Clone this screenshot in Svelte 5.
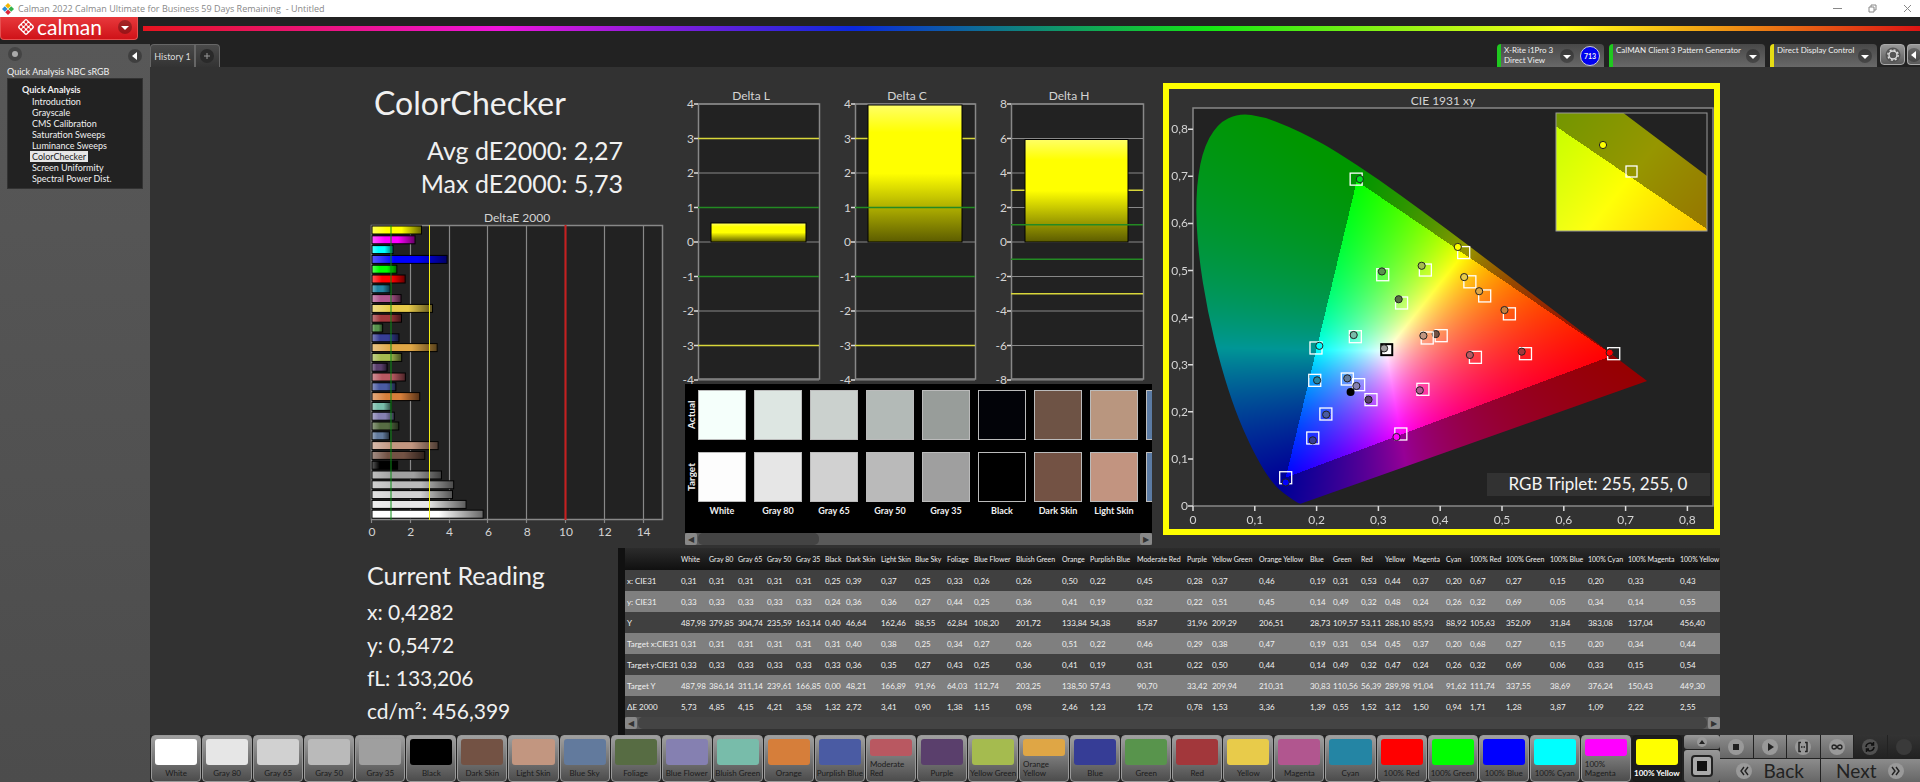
<script>
	import { onMount } from 'svelte';

	const pages = [
		'Introduction',
		'Grayscale',
		'CMS Calibration',
		'Saturation Sweeps',
		'Luminance Sweeps',
		'ColorChecker',
		'Screen Uniformity',
		'Spectral Power Dist.'
	];
	let currentPage = $state('ColorChecker');

	// name, color, table column width
	const patches = [
		['White', '#ffffff', 28],
		['Gray 80', '#e6e6e6', 29],
		['Gray 65', '#d1d1d1', 29],
		['Gray 50', '#bababa', 29],
		['Gray 35', '#9f9f9f', 29],
		['Black', '#000000', 21],
		['Dark Skin', '#735244', 35],
		['Light Skin', '#c29680', 34],
		['Blue Sky', '#627a9d', 32],
		['Foliage', '#576c43', 27],
		['Blue Flower', '#8580b1', 42],
		['Bluish Green', '#78bcaa', 46],
		['Orange', '#d67e3a', 28],
		['Purplish Blue', '#4a5ba3', 47],
		['Moderate Red', '#b95861', 50],
		['Purple', '#5a3f6c', 25],
		['Yellow Green', '#a5bb4f', 47],
		['Orange Yellow', '#dfa645', 51],
		['Blue', '#363d96', 23],
		['Green', '#58944c', 28],
		['Red', '#a2373b', 24],
		['Yellow', '#e8cb4a', 28],
		['Magenta', '#b1568f', 33],
		['Cyan', '#2485a4', 24],
		['100% Red', '#ff0000', 36],
		['100% Green', '#00ff00', 44],
		['100% Blue', '#0000ff', 38],
		['100% Cyan', '#00ffff', 40],
		['100% Magenta', '#ff00ff', 52],
		['100% Yellow', '#ffff00', 40]
	].map(([name, color, width]) => ({ name, color, width }));
	let selected = $state('100% Yellow');

	const readings = [
		['x: CIE31', '0,31 0,31 0,31 0,31 0,31 0,25 0,39 0,37 0,25 0,33 0,26 0,26 0,50 0,22 0,45 0,28 0,37 0,46 0,19 0,31 0,53 0,44 0,37 0,20 0,67 0,27 0,15 0,20 0,33 0,43'],
		['y: CIE31', '0,33 0,33 0,33 0,33 0,33 0,24 0,36 0,36 0,27 0,44 0,25 0,36 0,41 0,19 0,32 0,22 0,51 0,45 0,14 0,49 0,32 0,48 0,24 0,26 0,32 0,69 0,05 0,34 0,14 0,55'],
		['Y', '487,98 379,85 304,74 235,59 163,14 0,40 46,64 162,46 88,55 62,84 108,20 201,72 133,84 54,38 85,87 31,96 209,29 206,51 28,73 109,57 53,11 288,10 85,93 88,92 105,63 352,09 31,84 383,08 137,04 456,40'],
		['Target x:CIE31', '0,31 0,31 0,31 0,31 0,31 0,31 0,40 0,38 0,25 0,34 0,27 0,26 0,51 0,22 0,46 0,29 0,38 0,47 0,19 0,31 0,54 0,45 0,37 0,20 0,68 0,27 0,15 0,20 0,34 0,44'],
		['Target y:CIE31', '0,33 0,33 0,33 0,33 0,33 0,33 0,36 0,35 0,27 0,43 0,25 0,36 0,41 0,19 0,31 0,22 0,50 0,44 0,14 0,49 0,32 0,47 0,24 0,26 0,32 0,69 0,06 0,33 0,15 0,54'],
		['Target Y', '487,98 386,14 311,14 239,61 166,85 0,00 48,21 166,89 91,96 64,03 112,74 203,25 138,50 57,43 90,70 33,42 209,94 210,31 30,83 110,56 56,39 289,98 91,04 91,62 111,74 337,55 38,69 376,24 150,43 449,30'],
		['ΔE 2000', '5,73 4,85 4,15 4,21 3,58 1,32 2,72 3,41 0,90 1,38 1,15 0,98 2,46 1,23 1,72 0,78 1,53 3,36 1,39 0,55 1,52 3,12 1,50 0,94 1,71 1,28 3,87 1,09 2,22 2,55']
	].map(([label, line]) => ({ label, cells: line.split(' ') }));

	const dE = readings[6].cells.map((v) => parseFloat(v.replace(',', '.')));
	const bars = patches.map((p, i) => ({ ...p, value: dE[i] })).reverse();

	const deltas = [
		{ name: 'Delta L', x: 28, w: 121, mid: 81, max: 4, barX: 41, barW: 95, value: 0.58 },
		{ name: 'Delta C', x: 185, w: 120, mid: 237, max: 4, barX: 198, barW: 94, value: 4 },
		{ name: 'Delta H', x: 341, w: 132, mid: 399, max: 8, barX: 355, barW: 103, value: 6 }
	];
	const steps = [-4, -3, -2, -1, 0, 1, 2, 3, 4];
	const deltaY = (v, max) => 162 - (v * 138) / max;

	const actual = ['#f5fffb', '#dde6e2', '#cbd1ce', '#b3bab7', '#989d9a', '#020308', '#6e5345', '#b9967f', '#5b7ba4'];
	const target = ['#fdfdfd', '#e6e6e6', '#d1d1d1', '#bababa', '#9f9f9f', '#000000', '#735244', '#c29480', '#5b7ba4'];

	// target x, target y, measured x, measured y, color
	const points = [
		[0.264, 0.694, 0.27, 0.694, '#00e020'],
		[0.438, 0.538, 0.4285, 0.55, '#ffff00'],
		[0.307, 0.491, 0.3057, 0.498, '#58944c'],
		[0.376, 0.501, 0.37, 0.51, '#a5bb4f'],
		[0.3375, 0.431, 0.3328, 0.439, '#576c43'],
		[0.448, 0.476, 0.4388, 0.486, '#e8cb4a'],
		[0.472, 0.446, 0.463, 0.456, '#dfa645'],
		[0.512, 0.408, 0.504, 0.416, '#c8803e'],
		[0.4016, 0.3616, 0.3928, 0.365, '#735244'],
		[0.379, 0.3567, 0.3728, 0.3616, '#c29680'],
		[0.2627, 0.3595, 0.26, 0.363, '#78bcaa'],
		[0.199, 0.3355, 0.2044, 0.34, '#00ffff'],
		[0.197, 0.2668, 0.2008, 0.2668, '#2485a4'],
		[0.2497, 0.2696, 0.2497, 0.271, '#627a9d'],
		[0.268, 0.2576, 0.2644, 0.2548, '#8580b1'],
		[0.288, 0.2258, 0.284, 0.2258, '#5a3f6c'],
		[0.372, 0.2477, 0.367, 0.2456, '#b1568f'],
		[0.457, 0.3156, 0.448, 0.3206, '#b95861'],
		[0.538, 0.3234, 0.5318, 0.3277, '#a2373b'],
		[0.6808, 0.3234, 0.6743, 0.3255, '#ff0000'],
		[0.215, 0.1953, 0.2155, 0.194, '#4a5ba3'],
		[0.1938, 0.1444, 0.1938, 0.1394, '#363d96'],
		[0.15, 0.06, 0.15, 0.05, '#0000ff'],
		[0.3363, 0.1529, 0.3292, 0.1465, '#ff00ff']
	];
	const cx = (x) => 24 + x * 618;
	const cy = (y) => 417 - y * 471;
	const tenths = [0, 1, 2, 3, 4, 5, 6, 7, 8];
	const tenth = (n) => (n === 0 ? '0' : '0,' + n);

	// spectral locus, CIE 1931 2 degree observer
	const locus = [
		[0.1741, 0.005], [0.1714, 0.0051], [0.1644, 0.0109], [0.1566, 0.0177], [0.144, 0.0297],
		[0.1355, 0.0399], [0.1241, 0.0578], [0.1096, 0.0868], [0.0913, 0.1327], [0.0687, 0.2007],
		[0.0454, 0.295], [0.0235, 0.4127], [0.0082, 0.5384], [0.0039, 0.6548], [0.0139, 0.7502],
		[0.0389, 0.812], [0.0743, 0.8338], [0.1142, 0.8262], [0.1547, 0.8059], [0.1929, 0.7816],
		[0.2296, 0.7543], [0.3016, 0.6923], [0.3731, 0.6245], [0.4441, 0.5547], [0.5125, 0.4866],
		[0.5752, 0.4242], [0.627, 0.3725], [0.6658, 0.334], [0.6915, 0.3083], [0.719, 0.2809],
		[0.7347, 0.2653]
	];

	let diagram;
	let inset;

	function drawGamut(canvas, x0, y0, sx, sy) {
		const ctx = canvas.getContext('2d');
		const { width, height } = canvas;
		const image = ctx.createImageData(width, height);
		for (let j = 0; j < height; j++) {
			for (let i = 0; i < width; i++) {
				const x = x0 + (i + 0.5) / sx;
				const y = Math.max(y0 - (j + 0.5) / sy, 0.001);
				const X = x / y;
				const Z = (1 - x - y) / y;
				const r = 2.4935 * X - 0.9314 - 0.4027 * Z;
				const g = -0.8295 * X + 1.7627 + 0.0236 * Z;
				const b = 0.0358 * X - 0.0762 + 0.9569 * Z;
				const top = Math.max(r, g, b);
				const shade = Math.min(r, g, b) < 0 ? 150 : 255;
				const k = (j * width + i) * 4;
				image.data[k] = (Math.max(r, 0) / top) * shade;
				image.data[k + 1] = (Math.max(g, 0) / top) * shade;
				image.data[k + 2] = (Math.max(b, 0) / top) * shade;
				image.data[k + 3] = 255;
			}
		}
		ctx.putImageData(image, 0, 0);

		const pts = locus.map(([x, y]) => [(x - x0) * sx, (y0 - y) * sy]);
		ctx.globalCompositeOperation = 'destination-in';
		ctx.beginPath();
		ctx.moveTo(...pts[0]);
		for (let i = 1; i < pts.length - 1; i++) {
			const [ax, ay] = pts[i];
			const [bx, by] = pts[i + 1];
			ctx.quadraticCurveTo(ax, ay, (ax + bx) / 2, (ay + by) / 2);
		}
		ctx.lineTo(...pts[pts.length - 1]);
		ctx.closePath();
		ctx.fill();
	}

	onMount(() => {
		drawGamut(diagram, 0, 398 / 471, 618, 471);
		drawGamut(inset, 0.438 - 75 / 3090, 0.538 + 59 / 2355, 3090, 2355);
	});
</script>

{#snippet caret(direction)}
	<svg class="caret" viewBox="0 0 16 16" aria-hidden="true">
		<circle cx="8" cy="8" r="7" fill="#000" fill-opacity=".28" />
		{#if direction === 'left'}
			<path d="M10 4v8L5 8z" fill="#fff" />
		{:else}
			<path d="M4 7h8l-4 4z" fill="#fff" />
		{/if}
	</svg>
{/snippet}

<div class="app">
	<div class="titlebar">
		<svg width="12" height="12" viewBox="0 0 12 12" aria-hidden="true">
			<path d="M6 0l2.800 2.800L6 5.600 3.200 2.800z" fill="#f2b705" />
			<path d="M9.200 3.200L12 6 9.200 8.800 6.400 6z" fill="#33b24a" />
			<path d="M6 6.400l2.800 2.800L6 12 3.200 9.200z" fill="#d9263a" />
			<path d="M2.800 3.200L5.600 6 2.800 8.800 0 6z" fill="#2b8fd6" />
		</svg>
		<span>Calman 2022 Calman Ultimate for Business 59 Days Remaining &nbsp;- Untitled</span>
		<div class="window-buttons">
			<button aria-label="Minimize"><svg viewBox="0 0 9 9"><path d="M0 4.500h9" /></svg></button>
			<button aria-label="Restore"><svg viewBox="0 0 9 9"><path d="M1 3h5v5H1zM3 3V1h5v5H6" /></svg></button>
			<button aria-label="Close"><svg viewBox="0 0 9 9"><path d="M1 1l7 7M8 1L1 8" /></svg></button>
		</div>
	</div>

	<header class="brand">
		<button class="logo" aria-label="Calman menu">
			<svg width="18" height="18" viewBox="0 0 18 18" aria-hidden="true">
				<rect x="2.800" y="2.800" width="12.400" height="12.400" rx="2" transform="rotate(45 9 9)" fill="#fff" />
				<g fill="#dc2228">
					<circle cx="9" cy="4" r="1.400" /><circle cx="6.500" cy="6.500" r="1.400" /><circle cx="11.500" cy="6.500" r="1.400" />
					<circle cx="4" cy="9" r="1.400" /><circle cx="9" cy="9" r="1.400" /><circle cx="14" cy="9" r="1.400" />
					<circle cx="6.500" cy="11.500" r="1.400" /><circle cx="11.500" cy="11.500" r="1.400" /><circle cx="9" cy="14" r="1.400" />
				</g>
			</svg>
			<span>calman</span>
			{@render caret('down')}
		</button>
		<div class="rainbow"></div>
	</header>

	<div class="body">
		<aside>
			<div class="aside-top">
				<svg class="caret" viewBox="0 0 16 16" aria-hidden="true">
					<circle cx="8" cy="8" r="7" fill="#444" />
					<circle cx="8" cy="8" r="3" fill="#aaa" />
				</svg>
				<button aria-label="Collapse">{@render caret('left')}</button>
			</div>
			<h2>Quick Analysis NBC sRGB</h2>
			<nav>
				<strong>Quick Analysis</strong>
				{#each pages as page}
					<a href="#{page}" class:active={page === currentPage} onclick={() => (currentPage = page)}>{page}</a>
				{/each}
			</nav>
		</aside>

		<main>
			<div class="tabs">
				<button class="tab">History 1</button>
				<button class="tab add" aria-label="Add history">
					<svg class="caret" viewBox="0 0 16 16"><circle cx="8" cy="8" r="7" fill="#2a2a2a" /><path d="M5 8h6M8 5v6" stroke="#999" /></svg>
				</button>
				<div class="devices">
					<button class="device meter">
						<span>X-Rite i1Pro 3<br />Direct View</span>
						{@render caret('down')}
						<b>713</b>
					</button>
					<button class="device source">
						<span>CalMAN Client 3 Pattern Generator</span>
						{@render caret('down')}
					</button>
					<button class="device display">
						<span>Direct Display Control</span>
						{@render caret('down')}
					</button>
					<button class="square" aria-label="Settings">
						<svg viewBox="0 0 16 16">
							<circle cx="8" cy="8" r="7.500" fill="#555" />
							<circle cx="8" cy="8" r="4" fill="none" stroke="#ddd" stroke-width="1.400" />
							<circle cx="8" cy="8" r="5.200" fill="none" stroke="#ddd" stroke-width="1.400" stroke-dasharray="2 2.080" />
						</svg>
					</button>
					<button class="square cut" aria-label="Expand">{@render caret('left')}</button>
				</div>
			</div>

			<section class="charts">
				<div class="summary">
					<h1>ColorChecker</h1>
					<p>Avg dE2000: 2,27</p>
					<p>Max dE2000: 5,73</p>
					<svg viewBox="0 0 306 334" role="img" aria-label="DeltaE 2000">
						<defs>
							<linearGradient id="shade-x">
								<stop offset="0" stop-color="#fff" stop-opacity=".35" />
								<stop offset=".3" stop-color="#fff" stop-opacity="0" />
								<stop offset=".6" stop-color="#000" stop-opacity="0" />
								<stop offset="1" stop-color="#000" stop-opacity=".6" />
							</linearGradient>
						</defs>
						<text x="153" y="17" text-anchor="middle">DeltaE 2000</text>
						<rect class="plot" x="7.500" y="20.500" width="291" height="294" />
						{#each [0, 2, 4, 6, 8, 10, 12, 14] as v}
							<path class="grid" d="M{Math.round(7 + v * 19.4) + 0.5} 20v298" />
							<text x={8 + v * 19.4} y="331" text-anchor="middle">{v}</text>
						{/each}
						{#each bars as bar, i}
							<rect x="8" y={21 + i * 9.8} width={bar.value * 19.4} height="8" fill={bar.color} />
							<rect x="8" y={21 + i * 9.8} width={bar.value * 19.4} height="8" fill="url(#shade-x)" stroke="#000" />
						{/each}
						<path d="M27 20v295" stroke="#0a8a14" />
						<path d="M65.500 20v295" stroke="#f2ee18" />
						<path d="M201.500 20v295" stroke="#c81e1e" stroke-width="2" />
					</svg>
				</div>

				<div class="middle">
					<svg viewBox="0 0 493 304" role="img" aria-label="Delta L, C and H">
						<defs>
							<linearGradient id="shade-y" x2="0" y2="1">
								<stop offset="0" stop-color="#ffff66" />
								<stop offset=".2" stop-color="#ffff00" />
								<stop offset=".5" stop-color="#ffff00" />
								<stop offset="1" stop-color="#5c5c00" />
							</linearGradient>
						</defs>
						{#each deltas as d}
							<text x={d.mid} y="20" text-anchor="middle">{d.name}</text>
							<rect class="plot" x={d.x + 0.5} y="24" width={d.w} height="275" />
							{#each steps as s}
								{@const y = deltaY(s, 4)}
								<path class="grid" d="M{d.x} {y}h{d.w}" />
								<path class="tick" d="M{d.x - 4} {y}h4" />
								<text x={d.x - 4} y={y + 4} text-anchor="end">{(s * d.max) / 4}</text>
							{/each}
							<path d="M{d.x} {deltaY(3, d.max)}h{d.w}M{d.x} {deltaY(-3, d.max)}h{d.w}" stroke="#d8d63a" stroke-width="1.500" />
							<rect x={d.barX} y={deltaY(d.value, d.max) + 1} width={d.barW} height={161 - deltaY(d.value, d.max)} fill="url(#shade-y)" stroke="#000" />
							<path d="M{d.x} {deltaY(1, d.max)}h{d.w}M{d.x} {deltaY(-1, d.max)}h{d.w}" stroke="#238a23" stroke-width="1.500" />
						{/each}
					</svg>

					<div class="compare">
						<div class="line">
							<span class="side">Actual</span>
							{#each actual as color}<i style="background: {color}"></i>{/each}
						</div>
						<div class="line">
							<span class="side">Target</span>
							{#each target as color}<i style="background: {color}"></i>{/each}
						</div>
						<div class="line names">
							<span class="side"></span>
							{#each patches.slice(0, 9) as patch}<em>{patch.name}</em>{/each}
						</div>
					</div>
					<div class="scroll">
						<button aria-label="Scroll left">◀</button>
						<div class="thumb short"></div>
						<button aria-label="Scroll right">▶</button>
					</div>
				</div>

				<div class="cie">
					<svg viewBox="0 0 545 440" role="img" aria-label="CIE 1931 xy">
						<text x="274" y="16" text-anchor="middle">CIE 1931 xy</text>
						<rect class="plot" x="24" y="19" width="520" height="398" />
						<foreignObject x="24" y="19" width="520" height="398">
							<canvas bind:this={diagram} width="520" height="398"></canvas>
						</foreignObject>
						{#each tenths as n}
							<path class="tick" d="M{cx(n / 10)} 417v5M19 {cy(n / 10)}h5" />
							<text x={cx(n / 10)} y="435" text-anchor="middle">{tenth(n)}</text>
							<text x="19" y={cy(n / 10) + 4} text-anchor="end">{tenth(n)}</text>
						{/each}
						{#each points as [tx, ty, mx, my, color]}
							<rect x={cx(tx) - 6} y={cy(ty) - 6} width="12" height="12" fill="none" stroke="#fff" stroke-width="1.300" />
							<circle cx={cx(mx)} cy={cy(my)} r="3.600" fill={color} stroke="#222" />
						{/each}
						<rect x={cx(0.3127) - 5} y={cy(0.333) - 5} width="11" height="11" fill="#fff" stroke="#000" stroke-width="2" />
						<circle cx={cx(0.3092)} cy={cy(0.3347)} r="3.600" fill="#9f9f9f" stroke="#222" />
						<circle cx={cx(0.255)} cy={cy(0.242)} r="4" fill="#000" />

						<rect x="387" y="24" width="151" height="118" fill="#222" />
						<foreignObject x="387" y="24" width="151" height="118">
							<canvas bind:this={inset} width="151" height="118"></canvas>
						</foreignObject>
						<rect x="387" y="24" width="151" height="118" fill="none" stroke="#999" />
						<rect x="457" y="77" width="11" height="11" fill="none" stroke="#fff" stroke-width="1.300" />
						<circle cx="434" cy="56" r="3.600" fill="#ffff00" stroke="#222" />

						<rect x="318" y="384" width="223" height="23" fill="#323232" />
						<text class="triplet" x="429" y="401" text-anchor="middle">RGB Triplet: 255, 255, 0</text>
					</svg>
				</div>
			</section>

			<section class="data">
				<div class="reading">
					<h2>Current Reading</h2>
					<p>x: 0,4282</p>
					<p>y: 0,5472</p>
					<p>fL: 133,206</p>
					<p>cd/m²: 456,399</p>
				</div>
				<div class="sheet">
					<table>
						<colgroup>
							<col style="width: 56px" />
							{#each patches as patch}<col style="width: {patch.width}px" />{/each}
						</colgroup>
						<thead>
							<tr>
								<th></th>
								{#each patches as patch}<th>{patch.name}</th>{/each}
							</tr>
						</thead>
						<tbody>
							{#each readings as row}
								<tr>
									<th>{row.label}</th>
									{#each row.cells as cell}<td>{cell}</td>{/each}
								</tr>
							{/each}
						</tbody>
					</table>
					<div class="scroll">
						<button aria-label="Scroll left">◀</button>
						<div class="thumb"></div>
						<button aria-label="Scroll right">▶</button>
					</div>
				</div>
			</section>

			<footer>
				<div class="patches">
					{#each patches as patch}
						<button class="patch" class:selected={patch.name === selected} onclick={() => (selected = patch.name)}>
							<i style="background: {patch.color}"></i>
							<span class:wrap={['Moderate Red', 'Orange Yellow', '100% Magenta'].includes(patch.name)}>{patch.name}</span>
						</button>
					{/each}
				</div>
				<div class="level">
					<button aria-label="Up"><svg viewBox="0 0 16 12"><circle cx="8" cy="6" r="5" fill="#999" /><path d="M5 8l3-4 3 4z" fill="#222" /></svg></button>
					<button aria-label="Pattern window"><svg viewBox="0 0 24 24"><rect x="2" y="2" width="20" height="20" rx="3" fill="#aaa" stroke="#222" stroke-width="2" /><path d="M7 7h10v10H7z" fill="#111" /></svg></button>
				</div>
				<div class="transport">
					<div class="keys">
						<button aria-label="Stop"><svg viewBox="0 0 16 16"><circle cx="8" cy="8" r="8" fill="#999" /><path d="M5 5h6v6H5z" fill="#222" /></svg></button>
						<button aria-label="Play"><svg viewBox="0 0 16 16"><circle cx="8" cy="8" r="8" fill="#999" /><path d="M6 4l6 4-6 4z" fill="#222" /></svg></button>
						<button aria-label="Read series"><svg viewBox="0 0 16 16"><circle cx="8" cy="8" r="8" fill="#999" /><path d="M6 3.500H4v9h2M10 3.500h2v9h-2M6 8h1.500M8.500 8H10" fill="none" stroke="#222" stroke-width="1.500" /></svg></button>
						<button aria-label="Read continuous"><svg viewBox="0 0 16 16"><circle cx="8" cy="8" r="8" fill="#999" /><path d="M8 8C6 5 3 5.500 3 8s3 3 5 0 5-2.500 5 0-3 3-5 0z" fill="none" stroke="#222" stroke-width="1.400" /></svg></button>
						<button class="dim" aria-label="Repeat"><svg viewBox="0 0 16 16"><circle cx="8" cy="8" r="8" fill="#505050" /><path d="M4 8a4 4 0 0 1 7-2.500M12 8a4 4 0 0 1-7 2.500M11.500 3v3H9M4.500 13v-3H7" fill="none" stroke="#111" stroke-width="1.500" /></svg></button>
						<button class="dim" aria-label="Record"><svg viewBox="0 0 16 16"><circle cx="8" cy="8" r="8" fill="#3a3a3a" /></svg></button>
					</div>
					<div class="pager">
						<button><svg viewBox="0 0 16 16"><circle cx="8" cy="8" r="8" fill="#999" /><path d="M8 4L5 8l3 4M12 4L9 8l3 4" fill="none" stroke="#222" stroke-width="1.400" /></svg>Back</button>
						<button>Next<svg viewBox="0 0 16 16"><circle cx="8" cy="8" r="8" fill="#999" /><path d="M4 4l3 4-3 4M8 4l3 4-3 4" fill="none" stroke="#222" stroke-width="1.400" /></svg></button>
					</div>
				</div>
			</footer>
		</main>
	</div>
</div>

<style>
	:global(body) {
		background: #222;
	}
	.app {
		display: flex;
		flex-direction: column;
		min-height: 100vh;
		overflow: hidden;
		color: #f0f0f0;
		font-family: Lato, 'Open Sans', sans-serif;
		font-size: 10px;
	}
	button {
		margin: 0;
		padding: 0;
		border: 0;
		background: none;
		color: inherit;
		font: inherit;
	}
	h1,
	h2,
	p {
		margin: 0;
		font-weight: 400;
	}
	svg {
		display: block;
	}
	.caret {
		width: 16px;
		height: 16px;
		flex: none;
	}
	.titlebar {
		display: flex;
		align-items: center;
		gap: 4px;
		height: 17px;
		padding: 0 8px 0 2px;
		background: #fff;
		color: #888;
		font-family: 'Open Sans', sans-serif;
		font-size: 9px;
		line-height: 16px;
	}
	.window-buttons {
		display: flex;
		gap: 26px;
		margin-left: auto;
	}
	.window-buttons svg {
		width: 9px;
		height: 9px;
		fill: none;
		stroke: #888;
	}
	.brand {
		display: flex;
		align-items: flex-start;
		gap: 5px;
		height: 27px;
		background: #222;
	}
	.logo {
		display: flex;
		align-items: center;
		gap: 2px;
		box-sizing: border-box;
		width: 138px;
		height: 23px;
		padding: 0 4px 3px 16px;
		border: 1px solid #e65050;
		border-top: 0;
		border-radius: 0 0 4px 4px;
		background: linear-gradient(#e8393c, #cf1218);
		color: #fff;
		font-size: 21px;
		line-height: 20px;
	}
	.logo .caret {
		margin-left: auto;
	}
	.logo :global(.caret) {
		margin-left: auto;
	}
	.rainbow {
		flex: 1;
		height: 5px;
		margin-top: 9px;
		background: linear-gradient(90deg, #e6141e, #f014dc 20%, #0a28dc 40%, #14e614 60%, #ffff14 80%, #dc1414);
	}
	.body {
		display: flex;
		flex: 1;
	}
	aside {
		width: 150px;
		flex: none;
		box-sizing: border-box;
		padding: 2px 7px;
		background: linear-gradient(#585858, #4c4c4c);
	}
	.aside-top {
		display: flex;
		justify-content: space-between;
		height: 19px;
	}
	aside h2 {
		font-size: 9px;
		line-height: 13px;
	}
	nav {
		display: flex;
		flex-direction: column;
		align-items: flex-start;
		padding: 5px 0 4px 14px;
		border: 1px solid #333;
		background: #222;
		font-size: 9px;
		line-height: 11px;
	}
	nav strong {
		line-height: 12px;
	}
	nav a {
		margin-left: 8px;
		padding: 0 2px;
		color: #f0f0f0;
		text-decoration: none;
	}
	nav a.active {
		background: #e6e6e6;
		color: #222;
	}
	main {
		display: flex;
		flex: 1;
		flex-direction: column;
		min-width: 0;
		background: #323232;
	}
	.tabs {
		display: flex;
		height: 23px;
		background: #222;
	}
	.tab {
		width: 45px;
		border: 1px solid #666;
		border-bottom: 0;
		border-radius: 4px 0 0 0;
		background: linear-gradient(#4a4a4a, #333);
		color: #ddd;
		font-size: 9px;
	}
	.add {
		width: 25px;
		padding-left: 3px;
		border-radius: 0 4px 0 0;
	}
	.devices {
		display: flex;
		gap: 5px;
		margin-left: auto;
	}
	.device {
		display: flex;
		align-items: center;
		justify-content: space-between;
		box-sizing: border-box;
		width: 107px;
		padding: 0 4px 0 3px;
		border-left: 4px solid #1fc81f;
		border-radius: 4px 4px 0 0;
		background: linear-gradient(#484848, #686868);
		font-size: 8px;
		line-height: 10px;
		text-align: left;
		white-space: nowrap;
	}
	.device span {
		align-self: flex-start;
		padding-top: 1px;
	}
	.device b {
		width: 18px;
		border: 1px solid #ccd;
		border-radius: 50%;
		background: #0000f0;
		font-size: 7px;
		line-height: 18px;
		text-align: center;
	}
	.source {
		width: 156px;
	}
	.display {
		border-left-color: #e6dc14;
	}
	.square {
		display: flex;
		align-items: center;
		justify-content: center;
		width: 25px;
		height: 21px;
		margin-left: -2px;
		box-sizing: border-box;
		border: 1px solid #aaa;
		border-radius: 4px;
		background: linear-gradient(#999, #5a5a5a);
	}
	.square svg {
		width: 16px;
	}
	.cut {
		width: 13px;
		margin-left: -3px;
		overflow: hidden;
		border-right: 0;
		border-radius: 4px 0 0 4px;
	}
	.charts {
		display: grid;
		grid-template-columns: minmax(0, 306fr) minmax(0, 493fr) minmax(0, 557fr);
		padding: 0 11.300% 3px 12.090%;
	}
	.charts text {
		fill: #d4d4d4;
		font-size: 12px;
	}
	.charts .triplet {
		fill: #f4f4f4;
		font-size: 17px;
	}
	.plot {
		fill: #222;
		stroke: #888;
		stroke-width: 1.5;
	}
	.grid {
		fill: none;
		stroke: #888;
		stroke-width: 1.2;
	}
	.tick {
		fill: none;
		stroke: #ddd;
		stroke-width: 1.5;
	}
	canvas {
		display: block;
	}
	.summary {
		padding-top: 13px;
	}
	.summary h1 {
		margin-bottom: 8px;
		padding-left: 10px;
		font-size: 32px;
		line-height: 46px;
	}
	.summary p {
		padding-right: 47px;
		font-size: 25px;
		line-height: 33px;
		text-align: right;
	}
	.summary svg {
		margin-top: 5px;
	}
	.middle {
		padding-top: 13px;
	}
	.middle svg {
		overflow: visible;
	}
	.compare {
		display: flex;
		flex-direction: column;
		gap: 12px;
		height: 143px;
		margin: 0 11px 0 15px;
		padding-top: 6px;
		overflow: hidden;
		background: #000;
	}
	.line {
		display: flex;
		gap: 8px;
	}
	.line i,
	.line em {
		width: 46px;
		height: 48px;
		flex: none;
		border: 1px solid #bbb;
	}
	.side {
		width: 13px;
		flex: none;
		margin-right: -8px;
		font-weight: 700;
		line-height: 13px;
		text-align: center;
		writing-mode: vertical-rl;
		rotate: 180deg;
	}
	.names {
		margin-top: -10px;
	}
	.names em {
		height: auto;
		border-color: transparent;
		font-style: normal;
		font-weight: 700;
		font-size: 9px;
		text-align: center;
		white-space: nowrap;
	}
	.scroll {
		display: flex;
		height: 12px;
		background: #5a5a5a;
	}
	.middle .scroll {
		margin: 0 11px 0 15px;
	}
	.scroll button {
		width: 12px;
		border-radius: 2px;
		background: #888;
		color: #333;
		font-size: 8px;
		line-height: 12px;
	}
	.thumb {
		flex: 1;
		margin: 0 1px;
		border-radius: 5px;
		background: #444;
	}
	.short {
		flex: 0 0 26%;
		margin-right: auto;
	}
	.cie {
		align-self: start;
		margin-top: 16px;
		border: 6px solid #ff0;
	}
	.data {
		display: grid;
		flex: 1;
		grid-template-columns: minmax(0, 254fr) minmax(0, 1102fr);
		padding: 0 11.300% 0 12.090%;
	}
	.reading {
		padding: 10px 0 0 3px;
	}
	.reading h2 {
		margin-bottom: 3px;
		font-size: 25px;
		line-height: 34px;
	}
	.reading p {
		font-size: 21px;
		line-height: 33px;
	}
	.sheet {
		border-left: 7px solid #111;
	}
	table {
		width: 100%;
		border-collapse: collapse;
		table-layout: fixed;
		font-size: 8px;
	}
	th,
	td {
		height: 21px;
		padding: 0;
		font-weight: 400;
		text-align: left;
		white-space: nowrap;
	}
	thead th {
		height: 22px;
		font-size: 7px;
	}
	thead tr {
		background: linear-gradient(#2c2c2c, #101010);
	}
	tbody tr {
		background: #404040;
	}
	tbody tr:nth-child(even) {
		background: #7f7f7f;
	}
	tbody th {
		padding-left: 2px;
	}
	footer {
		display: flex;
		height: 47px;
		background: #222;
	}
	.patches {
		display: flex;
		flex: 1;
		gap: 1px;
		min-width: 0;
		padding-left: 1px;
	}
	.patch {
		display: flex;
		flex: 1 1 0;
		flex-direction: column;
		min-width: 0;
		padding: 3px 3px 1px;
		border: 1px solid #999;
		border-radius: 4px;
		background: linear-gradient(#a0a0a0, #4c4c4c);
		color: #1c1c1c;
		font-size: 8px;
		line-height: 9px;
		white-space: nowrap;
	}
	.patch i {
		flex: 1;
		align-self: stretch;
		margin-bottom: 4px;
		border-radius: 3px;
	}
	.patch span {
		align-self: center;
		padding-bottom: 2px;
	}
	.patch .wrap {
		align-self: flex-start;
		width: 36px;
		text-align: left;
		white-space: normal;
	}
	.patch.selected {
		border-color: #1a1a1a;
		background: #1c1c1c;
		color: #fff;
		font-weight: 700;
	}
	.level {
		display: flex;
		flex-direction: column;
		gap: 1px;
		width: 36px;
		margin-left: 2px;
	}
	.level button {
		display: flex;
		align-items: center;
		justify-content: center;
		flex: 1;
		border-radius: 3px;
		background: linear-gradient(#999, #666);
	}
	.level button:first-child {
		flex: 0 0 14px;
	}
	.level svg {
		height: 12px;
	}
	.level button:last-child svg {
		height: 24px;
	}
	.transport {
		display: flex;
		flex-direction: column;
		gap: 1px;
		width: 200px;
		color: #222;
	}
	.keys,
	.pager {
		display: flex;
		flex: 1;
		gap: 1px;
	}
	.transport button {
		display: flex;
		flex: 1;
		align-items: center;
		justify-content: center;
		gap: 12px;
		background: linear-gradient(#8c8c8c, #666);
		font-size: 19px;
		line-height: 20px;
	}
	.transport .dim {
		background: linear-gradient(#333, #222);
	}
	.transport svg {
		width: 16px;
	}
</style>
